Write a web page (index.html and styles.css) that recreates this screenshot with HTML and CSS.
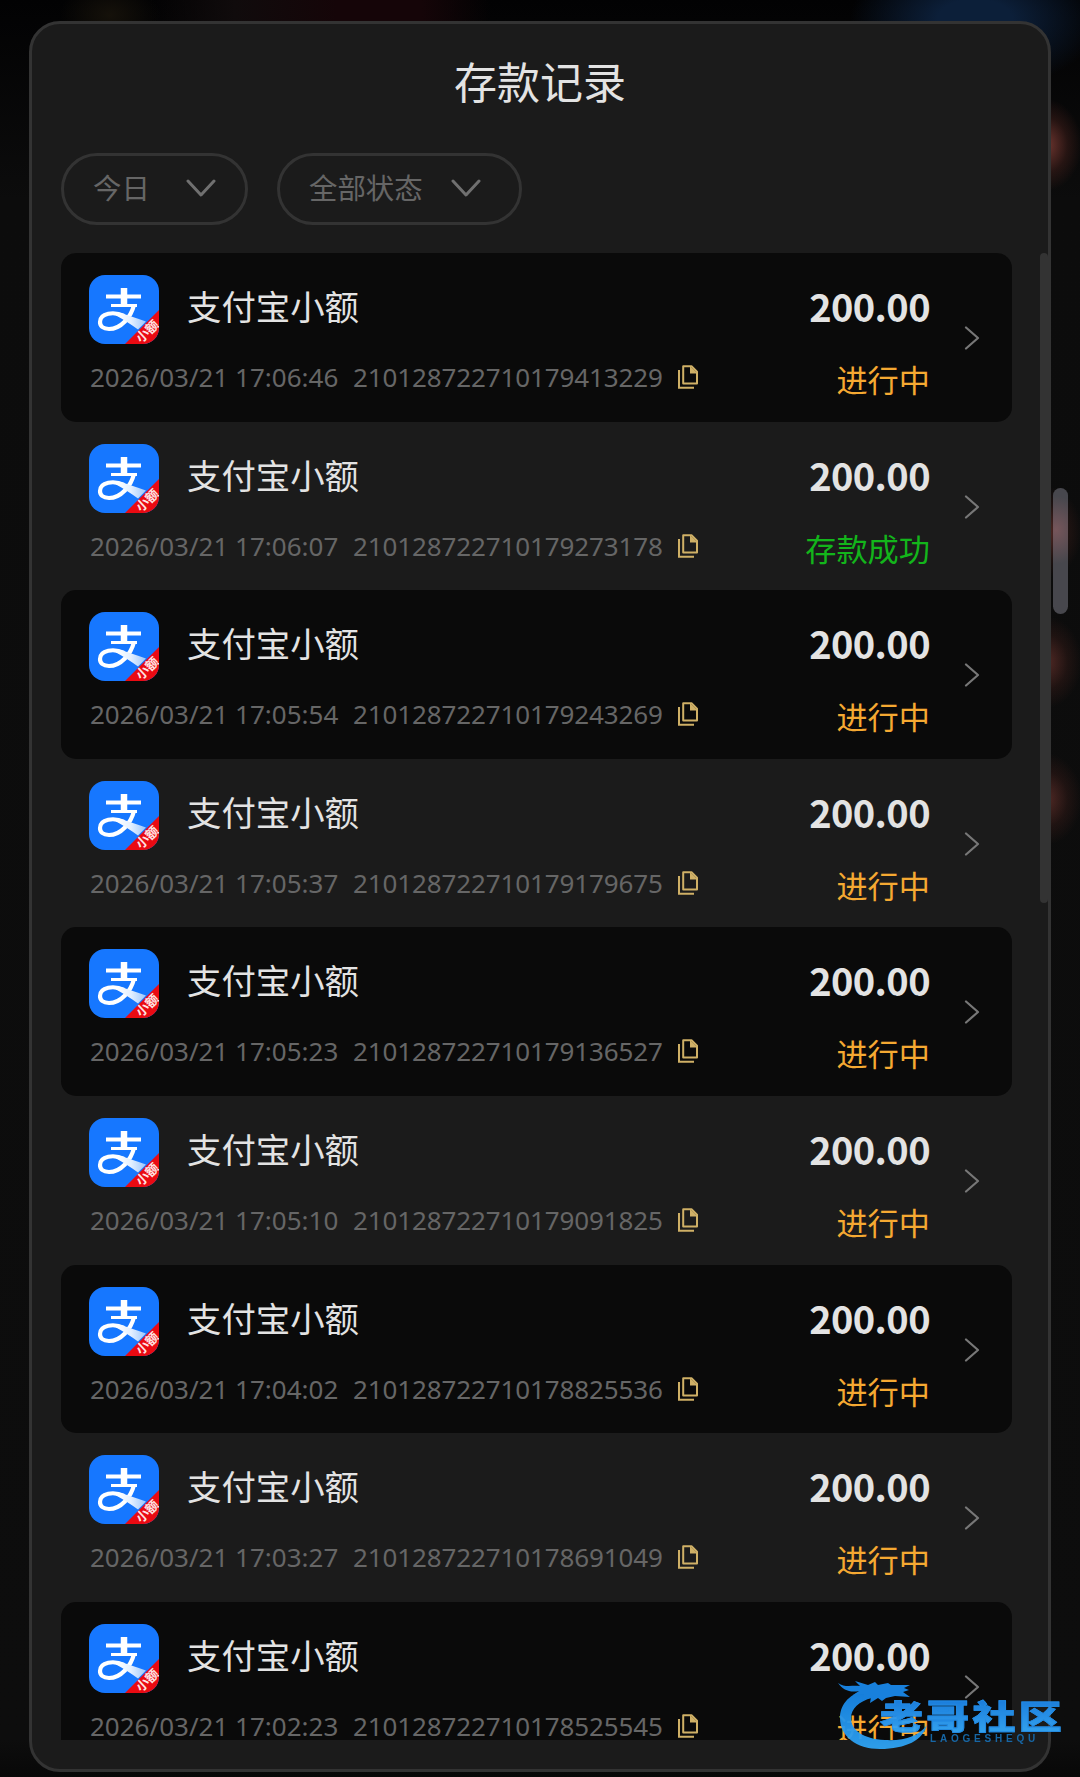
FILE: index.html
```
<!DOCTYPE html>
<html lang="zh-CN">
<head>
    <meta charset="UTF-8">
    <meta name="viewport" content="width=device-width, initial-scale=1.0">
    <title>存款记录</title>
    <link rel="stylesheet" href="styles.css">
</head>
<body>

    <svg width="0" height="0" class="sprite">
        <defs>
            <linearGradient id="tail" x1="0" y1="0" x2="1" y2="0">
                <stop offset="0" stop-color="#fff"/>
                <stop offset="0.5" stop-color="#e4f0ff"/>
                <stop offset="1" stop-color="#9cc6fc"/>
            </linearGradient>
            <linearGradient id="wave" x1="0" y1="0" x2="0" y2="1">
                <stop offset="0" stop-color="#1583e6"/>
                <stop offset="1" stop-color="#2fa4f4"/>
            </linearGradient>
        </defs>
        <symbol id="pay" viewBox="0 0 70 70">
            <path d="M17 21.500h35" fill="none" stroke="#fff" stroke-width="4"/>
            <path d="M35 13v18" fill="none" stroke="#fff" stroke-width="6.500"/>
            <path d="M22 30.500h26" fill="none" stroke="#fff" stroke-width="3"/>
            <path d="M45 30c-3 12-13 24-25 24-6 0-9-3-9-7 0-9 14-11 24-6" fill="none" stroke="#fff" stroke-width="4.200"/>
            <path d="M27 37c10 2 19 6 30 9.500l-8 8c-7-5-14-10-22-14z" fill="url(#tail)"/>
            <path d="M70 35v35H35z" fill="#ea0a12"/>
        </symbol>
        <symbol id="down" viewBox="0 0 30 18">
            <path d="M2 2l13 14L28 2" fill="none" stroke="currentColor" stroke-width="3" stroke-linecap="round" stroke-linejoin="round"/>
        </symbol>
        <symbol id="right" viewBox="0 0 16 24">
            <path d="M2 1.500L14 12 2 22.500" fill="none" stroke="currentColor" stroke-width="2.200" stroke-linecap="round" stroke-linejoin="round"/>
        </symbol>
        <symbol id="copy" viewBox="0 0 20 24">
            <path d="M5.200 1.200h8.300l5.500 5.500v11.800H5.200z" fill="none" stroke="currentColor" stroke-width="2" stroke-linejoin="round"/>
            <path d="M12 1l7.500 7.500h-7.500z" fill="currentColor"/>
            <path d="M1 5V22.700h15" fill="none" stroke="currentColor" stroke-width="2"/>
        </symbol>
    </svg>

    <!-- 背景光斑 -->
    <div class="glow glow-gold"></div>
    <div class="glow glow-wine"></div>
    <div class="glow glow-blue"></div>
    <div class="glow glow-red red-1"></div>
    <div class="glow glow-red red-2"></div>
    <div class="glow glow-red red-3"></div>
    <div class="glow glow-red red-4"></div>
    <div class="page-thumb"></div>

    <main class="panel">
        <h1>存款记录</h1>
        <div class="filters">
            <button class="filter">今日 <svg><use href="#down"/></svg></button>
            <button class="filter filter-status">全部状态 <svg><use href="#down"/></svg></button>
        </div>
        <div class="records" id="records"></div>
        <div class="list-thumb"></div>
    </main>

    <!-- 水印 -->
    <div class="watermark">
        <svg class="dragon" viewBox="0 0 92 72">
            <path d="M28 12C10 17 3 28 3 40c0 18 16 31 40 31 26 0 43-9 47-24-8 11-22 16-42 15C26 61 14 52 14 40c0-9 8-17 21-20z" fill="url(#wave)"/>
            <path d="M1 5c7 5 14 2 22 3l-5-5 13 4 7-3 3 3 10-2 3 2 19 0-6 3 5 2-6 2 7 5-15-1-9 2-4 3-4-3-8 5 1-6-9 3 2-6-11 1 6-4C13 15 6 12 1 5z" fill="#1987e8"/>
        </svg>
        <div class="brand">
            <span class="brand-name">老哥社区</span>
            <span class="brand-latin">LAOGESHEQU</span>
        </div>
    </div>

    <script>
        const records = [
            ["17:06:46", "210128722710179413229"],
            ["17:06:07", "210128722710179273178", "存款成功"],
            ["17:05:54", "210128722710179243269"],
            ["17:05:37", "210128722710179179675"],
            ["17:05:23", "210128722710179136527"],
            ["17:05:10", "210128722710179091825"],
            ["17:04:02", "210128722710178825536"],
            ["17:03:27", "210128722710178691049"],
            ["17:02:23", "210128722710178525545"]
        ];

        document.getElementById("records").innerHTML = records.map(([time, id, done]) => `
            <div class="record">
                <div class="info">
                    <div class="method">
                        <div class="logo"><svg><use href="#pay"/></svg><span>小额</span></div>
                        <span class="name">支付宝小额</span>
                    </div>
                    <div class="meta">
                        <span class="date">2026/03/21 ${time}</span>
                        <span class="order">${id}</span>
                        <svg><use href="#copy"/></svg>
                    </div>
                </div>
                <div class="result">
                    <span class="amount">200.00</span>
                    <span class="status ${done ? "done" : ""}">${done || "进行中"}</span>
                </div>
                <svg class="arrow"><use href="#right"/></svg>
            </div>`).join("");
    </script>
</body>
</html>
```
FILE: styles.css
```
* {
    box-sizing: border-box;
}

body {
    font-family: "Noto Sans CJK SC", sans-serif;
    margin: 0;
    height: 1777px;
    padding: 21px 29px 5px;
    background: linear-gradient(#020203 0, #0c0c0c 200px, #0d0d0d 1740px, #080808);
    color: #e3e3e3;
    position: relative;
    overflow: hidden;
}

.sprite {
    position: absolute;
}

.panel {
    position: relative;
    width: 1022px;
    height: 1751px;
    padding: 0 29px;
    background-color: #1b1b1b;
    border: 3px solid #333;
    border-radius: 31px;
}

h1 {
    margin: 0;
    padding-top: 25px;
    height: 129px;
    font-size: 43px;
    line-height: 62px;
    font-weight: 400;
    text-align: center;
}

.filters {
    display: flex;
    gap: 29px;
    height: 100px;
}

.filter {
    display: flex;
    align-items: center;
    justify-content: space-between;
    width: 187px;
    height: 72px;
    padding: 0 29px 5px;
    background: none;
    border: 3px solid #333;
    border-radius: 36px;
    color: #666;
    font-family: inherit;
    font-size: 28.400px;
}

.filter-status {
    width: 245px;
    padding-right: 38px;
}

.filter svg {
    width: 30px;
    height: 18px;
    margin-top: 3px;
    color: #707070;
}

.records {
    width: 951px;
    height: 1487px;
    overflow: hidden;
}

.record {
    display: flex;
    height: 168.600px;
    padding: 22px 32px 0 28px;
    border-radius: 15px;
}

.record:nth-child(odd) {
    background-color: #0a0a0a;
}

.info {
    flex: 1;
}

.method {
    display: flex;
    gap: 28px;
}

.logo {
    position: relative;
    width: 70px;
    height: 69px;
    background-color: #1677ff;
    border-radius: 16px;
    overflow: hidden;
}

.logo svg {
    display: block;
    width: 70px;
    height: 70px;
}

.logo span {
    position: absolute;
    left: 45px;
    top: 49px;
    font-size: 13px;
    line-height: 14px;
    font-weight: 700;
    color: #ffe3e3;
    white-space: nowrap;
    transform: rotate(-43deg);
}

.name {
    font-size: 34.400px;
    line-height: 60px;
}

.meta {
    display: flex;
    align-items: center;
    height: 36px;
    margin-top: 15px;
    padding-left: 1px;
    font-family: "Noto Sans", sans-serif;
    font-size: 26px;
    color: #666;
    white-space: nowrap;
}

.date {
    width: 263px;
}

.order {
    width: 325px;
    letter-spacing: -0.120px;
}

.meta svg {
    width: 20px;
    height: 24px;
    color: #cfb066;
}

.result {
    display: flex;
    flex-direction: column;
    align-items: flex-end;
    width: 160px;
}

.amount {
    font-size: 38px;
    line-height: 61px;
    font-weight: 700;
    letter-spacing: -0.600px;
}

.status {
    font-size: 31.200px;
    line-height: 46px;
    margin-top: 20px;
    color: #f5a932;
}

.done {
    color: #13b51b;
}

.arrow {
    width: 16px;
    height: 24px;
    margin: 51px 0 0 34px;
    color: #777;
}

.list-thumb {
    position: absolute;
    right: 0;
    top: 229px;
    width: 8px;
    height: 650px;
    background-color: #333;
    border-radius: 4px;
}

.page-thumb {
    position: absolute;
    left: 1053px;
    top: 488px;
    width: 15px;
    height: 126px;
    background: radial-gradient(ellipse 28px 34px at 3px 42px, #76565b, #47474d);
    border-radius: 8px;
}

.glow {
    position: absolute;
}

.glow-gold {
    left: 60px;
    top: -20px;
    width: 100px;
    height: 70px;
    background: radial-gradient(closest-side, #15110a, transparent);
}

.glow-wine {
    left: 150px;
    top: 0;
    width: 340px;
    height: 30px;
    background: linear-gradient(90deg, transparent, #100b0c 25%, #150508 55%, #150508 80%, transparent);
}

.glow-blue {
    left: 850px;
    top: -50px;
    width: 250px;
    height: 140px;
    background: radial-gradient(closest-side, #0c1f39 30%, transparent);
}

.glow-red {
    left: 1010px;
    width: 72px;
    height: 92px;
    background: radial-gradient(closest-side, #703630, rgba(90, 40, 34, 0.35) 60%, transparent);
}

.red-1 {
    top: 99px;
}

.red-2 {
    top: 486px;
    opacity: 0.700;
}

.red-3 {
    top: 616px;
    opacity: 0.700;
}

.red-4 {
    top: 753px;
    opacity: 0.700;
}

.watermark {
    position: absolute;
    left: 837px;
    top: 1678px;
    display: flex;
    opacity: 0.950;
}

.dragon {
    width: 92px;
    height: 72px;
}

.brand {
    margin-left: -49px;
    padding-top: 19px;
    display: flex;
    flex-direction: column;
}

.brand-name {
    font-size: 33px;
    line-height: 37px;
    font-weight: 900;
    letter-spacing: 2.600px;
    color: transparent;
    background: linear-gradient(#1a80e6, #36abfa);
    -webkit-background-clip: text;
    background-clip: text;
    -webkit-text-stroke: 0.800px #2490ee;
    transform: scaleX(1.300);
    transform-origin: left;
}

.brand-latin {
    padding-left: 50px;
    font-family: "Liberation Sans", sans-serif;
    font-size: 10px;
    line-height: 10px;
    font-weight: 700;
    letter-spacing: 3.800px;
    color: #176bad;
}
```
